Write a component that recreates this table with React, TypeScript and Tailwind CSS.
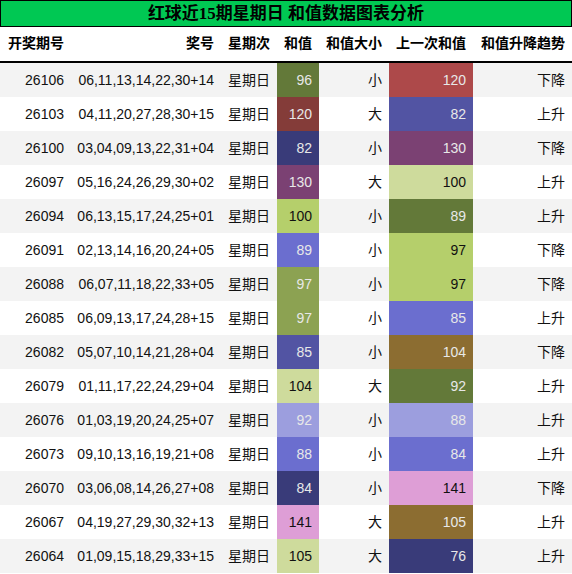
type Row = {
  issue: string;
  balls: string;
  sum: number;
  sumColor: string;
  size: string;
  prev: number;
  prevColor: string;
  trend: string;
};

const rows: Row[] = [
  { issue: "26106", balls: "06,11,13,14,22,30+14", sum: 96, sumColor: "#637939", size: "小", prev: 120, prevColor: "#ad494a", trend: "下降" },
  { issue: "26103", balls: "04,11,20,27,28,30+15", sum: 120, sumColor: "#843c39", size: "大", prev: 82, prevColor: "#5254a3", trend: "上升" },
  { issue: "26100", balls: "03,04,09,13,22,31+04", sum: 82, sumColor: "#393b79", size: "小", prev: 130, prevColor: "#7b4173", trend: "下降" },
  { issue: "26097", balls: "05,16,24,26,29,30+02", sum: 130, sumColor: "#7b4173", size: "大", prev: 100, prevColor: "#cedb9c", trend: "上升" },
  { issue: "26094", balls: "06,13,15,17,24,25+01", sum: 100, sumColor: "#b5cf6b", size: "小", prev: 89, prevColor: "#637939", trend: "上升" },
  { issue: "26091", balls: "02,13,14,16,20,24+05", sum: 89, sumColor: "#6b6ecf", size: "小", prev: 97, prevColor: "#b5cf6b", trend: "下降" },
  { issue: "26088", balls: "06,07,11,18,22,33+05", sum: 97, sumColor: "#8ca252", size: "小", prev: 97, prevColor: "#b5cf6b", trend: "下降" },
  { issue: "26085", balls: "06,09,13,17,24,28+15", sum: 97, sumColor: "#8ca252", size: "小", prev: 85, prevColor: "#6b6ecf", trend: "上升" },
  { issue: "26082", balls: "05,07,10,14,21,28+04", sum: 85, sumColor: "#5254a3", size: "小", prev: 104, prevColor: "#8c6d31", trend: "下降" },
  { issue: "26079", balls: "01,11,17,22,24,29+04", sum: 104, sumColor: "#cedb9c", size: "大", prev: 92, prevColor: "#637939", trend: "上升" },
  { issue: "26076", balls: "01,03,19,20,24,25+07", sum: 92, sumColor: "#9c9ede", size: "小", prev: 88, prevColor: "#9c9ede", trend: "上升" },
  { issue: "26073", balls: "09,10,13,16,19,21+08", sum: 88, sumColor: "#6b6ecf", size: "小", prev: 84, prevColor: "#6b6ecf", trend: "上升" },
  { issue: "26070", balls: "03,06,08,14,26,27+08", sum: 84, sumColor: "#393b79", size: "小", prev: 141, prevColor: "#de9ed6", trend: "下降" },
  { issue: "26067", balls: "04,19,27,29,30,32+13", sum: 141, sumColor: "#de9ed6", size: "大", prev: 105, prevColor: "#8c6d31", trend: "上升" },
  { issue: "26064", balls: "01,09,15,18,29,33+15", sum: 105, sumColor: "#cedb9c", size: "大", prev: 76, prevColor: "#393b79", trend: "上升" },
];

const light = ["#b5cf6b", "#cedb9c", "#de9ed6"];

const cols = "grid grid-cols-[71px_150px_56px_42px_70px_84px_99px]";

function Swatch({ value, color }: { value: number; color: string }) {
  const dark = !light.includes(color);
  return (
    <div
      className={`flex items-center justify-end pr-[7px] ${dark ? "text-[#e8e8e8]" : "text-[#111]"}`}
      style={{ backgroundColor: color }}
    >
      {value}
    </div>
  );
}

export default function App() {
  return (
    <div
      className="w-[572px] h-[574px] bg-white overflow-hidden text-[14px] text-[#111]"
      style={{ fontFamily: '"Liberation Sans", "Noto Sans CJK SC", sans-serif' }}
    >
      <div
        className="h-[27px] border border-black bg-[#00c853] flex items-center justify-center text-[17px] font-bold text-black"
        style={{ fontFamily: '"Liberation Serif", "Noto Sans CJK SC", serif' }}
      >
        红球近15期星期日 和值数据图表分析
      </div>

      <div className={`${cols} h-[36px] border-b-2 border-black font-bold text-black`}>
        {["开奖期号", "奖号", "星期次", "和值", "和值大小", "上一次和值", "和值升降趋势"].map((h) => (
          <div key={h} className="flex items-center justify-end pr-[7px] pb-[1px]">
            {h}
          </div>
        ))}
      </div>

      {rows.map((r, i) => (
        <div
          key={r.issue}
          className={`${cols} h-[34px] ${i % 2 === 0 ? "bg-[#f3f3f3]" : "bg-white"}`}
        >
          <div className="flex items-center justify-end pr-[7px]">{r.issue}</div>
          <div className="flex items-center justify-end pr-[7px]">{r.balls}</div>
          <div className="flex items-center justify-end pr-[7px]">星期日</div>
          <Swatch value={r.sum} color={r.sumColor} />
          <div className="flex items-center justify-end pr-[7px]">{r.size}</div>
          <Swatch value={r.prev} color={r.prevColor} />
          <div className="flex items-center justify-end pr-[7px]">{r.trend}</div>
        </div>
      ))}
    </div>
  );
}
